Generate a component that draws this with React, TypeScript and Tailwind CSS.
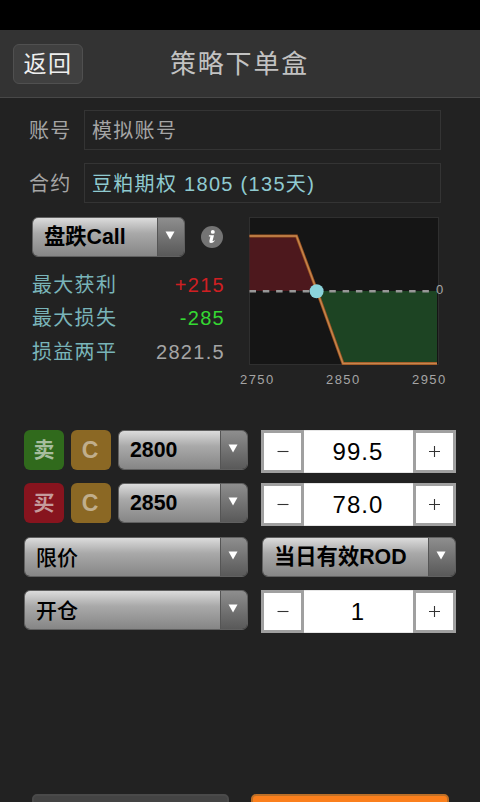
import { useState } from 'react'
import clsx from 'clsx'

function Select({ label, className, textClass }: { label: string, className?: string, textClass?: string }) {
  return (
    <button className={clsx('flex h-10 shrink-0 overflow-hidden rounded-[6px] border border-[#606060] text-left', className)}>
      <span className={clsx('flex h-full flex-1 items-center whitespace-nowrap bg-linear-to-b from-[#dcdcdc] via-[#a9a9a9] via-40% to-[#868686] pl-[11px] pt-[1px] text-black', textClass || 'text-[21.3px] font-bold')}>
        {label}
      </span>
      <span className="flex h-full w-[27px] items-start justify-center border-l border-[#555] bg-linear-to-b from-[#8e8e8e] to-[#595959] pr-[3px] pt-[13px]">
        <svg width="10" height="9" viewBox="0 0 10 9"><path d="M0.5 0.5H9.5L5 8.5Z" fill="#fff" /></svg>
      </span>
    </button>
  )
}

function Stepper({ value, step, digits }: { value: number, step: number, digits: number }) {
  const [current, setCurrent] = useState(value)
  return (
    <div className="flex h-[43px] w-[195px] shrink-0 bg-white">
      <button className="flex w-[43px] items-center justify-center border-3 border-[#a0a0a0]" aria-label="-" onClick={() => setCurrent(current - step)}>
        <svg width="12" height="12" viewBox="0 0 12 12"><path d="M0.5 5.5H11.5" stroke="#333" strokeWidth="1.1" /></svg>
      </button>
      <div className="flex flex-1 items-center justify-center border-y border-[#e6e6e6] pr-[1px] text-[24px] tracking-[1.1px] text-black">
        {current.toFixed(digits)}
      </div>
      <button className="flex w-[43px] items-center justify-center border-3 border-[#a0a0a0]" aria-label="+" onClick={() => setCurrent(current + step)}>
        <svg width="12" height="12" viewBox="0 0 12 12"><path d="M0 5.5H11M5.5 0V11" stroke="#333" strokeWidth="1.1" /></svg>
      </button>
    </div>
  )
}

function Badge({ text, className }: { text: string, className: string }) {
  return (
    <span className={clsx('mr-[7px] flex h-10 w-10 shrink-0 items-center justify-center rounded-[6px] font-bold', className)}>
      {text}
    </span>
  )
}

function Field({ label, value, valueClass }: { label: string, value: string, valueClass: string }) {
  return (
    <div className="flex h-10 items-center">
      <label className="w-[84px] pl-[29px] pt-[2px] text-[20px] tracking-[1.3px] text-[#a5a5a5]">{label}</label>
      <div className={clsx('flex h-full w-[357px] items-center whitespace-pre border border-[#343434] pl-[7px] pt-[2px] text-[20px] tracking-[1.3px]', valueClass)}>
        {value}
      </div>
    </div>
  )
}

function PayoffChart() {
  return (
    <svg className="absolute left-[238px] top-0" width="212" height="172" viewBox="238 217 212 172">
      <rect x="249.5" y="217.5" width="189" height="147" fill="#151515" stroke="#2f2f2f" />
      <path d="M249.5 236H296.5L317 291H249.5Z" fill="#4d181d" />
      <path d="M317 291H437V364H343Z" fill="#1d4423" />
      <path d="M249.5 291.3H434" stroke="#979797" strokeWidth="2.4" strokeDasharray="6.5 6.8" />
      <path d="M249.5 236H296.5L317 291L343 363.5H437" fill="none" stroke="#9c5220" strokeWidth="3" />
      <path d="M249.5 236H296.5L317 291L343 363.5H437" fill="none" stroke="#c4864e" strokeWidth="1.4" />
      <circle cx="316.6" cy="291.3" r="7" fill="#8bd3da" />
      <g fill="#a5a5a5" fontSize="13" letterSpacing="1.4">
        <text x="436" y="293.5">0</text>
        <text x="240" y="383.5">2750</text>
        <text x="326" y="383.5">2850</text>
        <text x="412" y="383.5">2950</text>
      </g>
    </svg>
  )
}

const stats = [
  { label: '最大获利', value: '+215', labelClass: 'text-[#79b4b9]', valueClass: 'text-[#d01f22]' },
  { label: '最大损失', value: '-285', labelClass: 'text-[#79b4b9]', valueClass: 'text-[#35d832]' },
  { label: '损益两平', value: '2821.5', labelClass: 'text-[#79b4b9]', valueClass: 'text-[#a5a5a5]' },
]

export default function App() {
  return (
    <div className="flex h-[802px] w-[480px] flex-col overflow-hidden bg-[#222] font-['Liberation_Sans','Noto_Sans_CJK_SC',sans-serif]">
      {/* Status bar */}
      <div className="h-[30px] shrink-0 bg-black" />

      {/* Header */}
      <header className="flex h-[68px] shrink-0 items-center border-b border-[#484848] bg-[#333] pl-[13px]">
        <button className="flex h-10 w-[70px] items-center justify-center rounded-[6px] border border-[#505050] bg-[#404040] pt-[2px] text-[23px] tracking-[1.5px] text-[#eee]">
          返回
        </button>
        <h1 className="ml-[87px] pt-[2px] text-[26px] tracking-[1.8px] text-[#c2c2c2]">策略下单盒</h1>
      </header>

      {/* Account and contract */}
      <section className="mt-3 flex shrink-0 flex-col gap-[13px]">
        <Field label="账号" value="模拟账号" valueClass="text-[#a5a5a5]" />
        <Field label="合约" value="豆粕期权 1805 (135天)" valueClass="text-[#8fcad0]" />
      </section>

      {/* Strategy summary */}
      <section className="relative mt-[14px] h-[213px] shrink-0 pl-8">
        <div className="flex items-center">
          <Select label="盘跌Call" className="w-[153px]" />
          <svg className="ml-4" width="22" height="22" viewBox="0 0 22 22">
            <circle cx="11" cy="11" r="11" fill="#747474" />
            <ellipse cx="11.8" cy="5.9" rx="2" ry="1.9" fill="#fff" />
            <path d="M8 9.2H13L11.5 15.1Q12.5 15.1 13.4 14.2L13.8 14.8Q12 17.3 9.8 17.1Q7.9 16.9 8.4 14.7L9.4 10.5H7.8Z" fill="#fff" />
          </svg>
        </div>
        <dl className="mt-[11px] w-[193px]">
          {stats.map((s) => (
            <div key={s.label} className="flex h-[33.5px] items-center justify-between text-[20px] tracking-[1.3px]">
              <dt className={s.labelClass}>{s.label}</dt>
              <dd className={s.valueClass}>{s.value}</dd>
            </div>
          ))}
        </dl>
        <PayoffChart />
      </section>

      {/* Order legs */}
      <section className="flex shrink-0 flex-col pl-6">
        <div className="flex h-[53px]">
          <Badge text="卖" className="bg-[#306a1c] text-[21px] text-[#a7bd9f]" />
          <Badge text="C" className="bg-[#8b6824] pr-[2px] text-[23px] text-[#c0ae8c]" />
          <Select label="2800" className="mr-[13px] w-[130px]" />
          <Stepper value={99.5} step={0.5} digits={1} />
        </div>
        <div className="flex h-[54px]">
          <Badge text="买" className="bg-[#87141e] text-[21px] text-[#c59b9c]" />
          <Badge text="C" className="bg-[#8b6824] pr-[2px] text-[23px] text-[#c0ae8c]" />
          <Select label="2850" className="mr-[13px] w-[130px]" />
          <Stepper value={78} step={0.5} digits={1} />
        </div>
        <div className="flex h-[53px]">
          <Select label="限价" className="mr-[14px] w-[224px]" textClass="text-[21px] font-medium" />
          <Select label="当日有效ROD" className="w-[194px]" />
        </div>
        <div className="flex h-[53px]">
          <Select label="开仓" className="mr-[13px] w-[224px]" textClass="text-[21px] font-medium" />
          <Stepper value={1} step={1} digits={0} />
        </div>
      </section>

      {/* Bottom actions */}
      <footer className="mt-auto flex h-2 shrink-0 gap-[22px] overflow-hidden pl-8">
        <button className="h-12 w-[197px] rounded-[5px] border-2 border-[#4a4a4a] bg-[#444]" />
        <button className="h-12 w-[198px] rounded-[5px] border-2 border-[#bd6f27] bg-[#fb7f1c]" />
      </footer>
    </div>
  )
}
